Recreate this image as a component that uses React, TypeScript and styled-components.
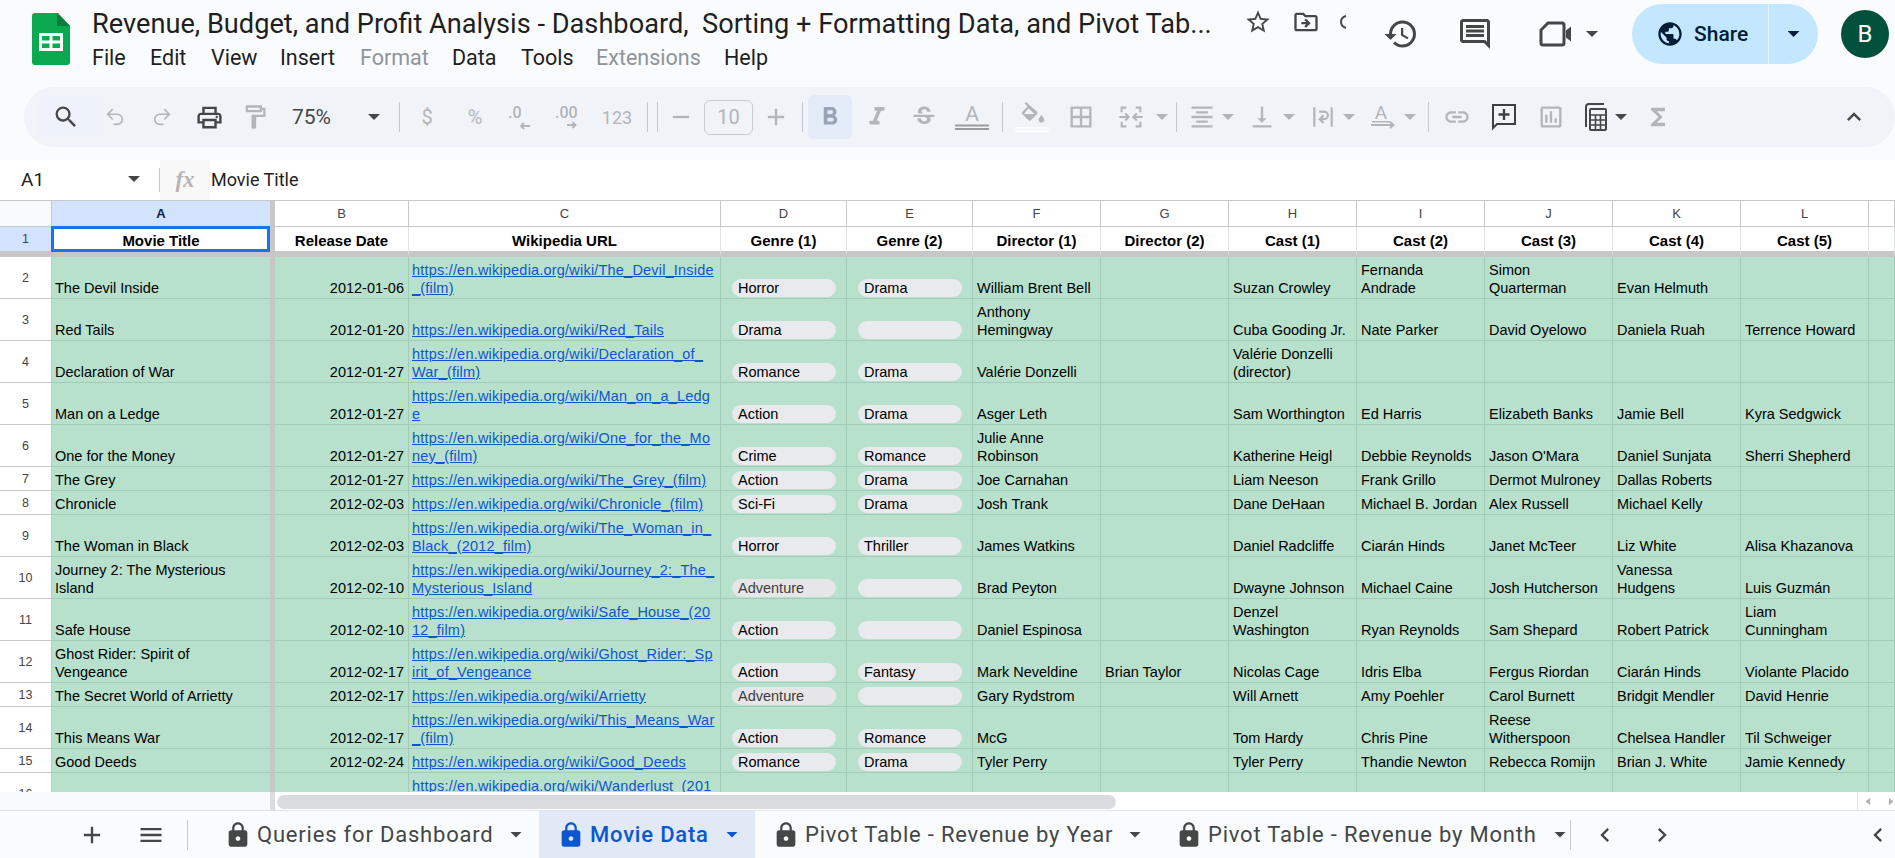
import type { ReactNode } from "react";
import styled, { createGlobalStyle } from "styled-components";
import { Redo2, Undo2 } from "lucide-react";
import {
  MdAdd,
  MdBorderAll,
  MdChevronLeft,
  MdChevronRight,
  MdExpandLess,
  MdFormatAlignCenter,
  MdFormatBold,
  MdFormatItalic,
  MdFunctions,
  MdHistory,
  MdLink,
  MdLock,
  MdMenu,
  MdOutlineComment,
  MdOutlineDriveFileMove,
  MdOutlineFormatPaint,
  MdOutlineInsertChart,
  MdOutlinePrint,
  MdPublic,
  MdRemove,
  MdSearch,
  MdStarBorder,
  MdStrikethroughS,
  MdVerticalAlignBottom,
} from "react-icons/md";

const GlobalStyle = createGlobalStyle`
  html, body {
    margin: 0;
    padding: 0;
    height: 100%;
    overflow: hidden;
    background: #f9fbfd;
    font-family: "Liberation Sans", Arial, sans-serif;
  }
  * { box-sizing: border-box; }
`;

const WIKI = "https://en.wikipedia.org/wiki/";

const COLUMNS = [
  { letter: "A", title: "Movie Title" },
  { letter: "B", title: "Release Date" },
  { letter: "C", title: "Wikipedia URL" },
  { letter: "D", title: "Genre (1)" },
  { letter: "E", title: "Genre (2)" },
  { letter: "F", title: "Director (1)" },
  { letter: "G", title: "Director (2)" },
  { letter: "H", title: "Cast (1)" },
  { letter: "I", title: "Cast (2)" },
  { letter: "J", title: "Cast (3)" },
  { letter: "K", title: "Cast (4)" },
  { letter: "L", title: "Cast (5)" },
  { letter: "", title: "" },
];

type Movie = { tall: boolean; cells: string[] };

const MOVIES: Movie[] = [
  { tall: true, cells: ["The Devil Inside", "2012-01-06", "The_Devil_Inside\n_(film)", "Horror", "Drama", "William Brent Bell", "", "Suzan Crowley", "Fernanda\nAndrade", "Simon\nQuarterman", "Evan Helmuth", ""] },
  { tall: true, cells: ["Red Tails", "2012-01-20", "Red_Tails", "Drama", "-", "Anthony\nHemingway", "", "Cuba Gooding Jr.", "Nate Parker", "David Oyelowo", "Daniela Ruah", "Terrence Howard"] },
  { tall: true, cells: ["Declaration of War", "2012-01-27", "Declaration_of_\nWar_(film)", "Romance", "Drama", "Valérie Donzelli", "", "Valérie Donzelli\n(director)", "", "", "", ""] },
  { tall: true, cells: ["Man on a Ledge", "2012-01-27", "Man_on_a_Ledg\ne", "Action", "Drama", "Asger Leth", "", "Sam Worthington", "Ed Harris", "Elizabeth Banks", "Jamie Bell", "Kyra Sedgwick"] },
  { tall: true, cells: ["One for the Money", "2012-01-27", "One_for_the_Mo\nney_(film)", "Crime", "Romance", "Julie Anne\nRobinson", "", "Katherine Heigl", "Debbie Reynolds", "Jason O'Mara", "Daniel Sunjata", "Sherri Shepherd"] },
  { tall: false, cells: ["The Grey", "2012-01-27", "The_Grey_(film)", "Action", "Drama", "Joe Carnahan", "", "Liam Neeson", "Frank Grillo", "Dermot Mulroney", "Dallas Roberts", ""] },
  { tall: false, cells: ["Chronicle", "2012-02-03", "Chronicle_(film)", "Sci-Fi", "Drama", "Josh Trank", "", "Dane DeHaan", "Michael B. Jordan", "Alex Russell", "Michael Kelly", ""] },
  { tall: true, cells: ["The Woman in Black", "2012-02-03", "The_Woman_in_\nBlack_(2012_film)", "Horror", "Thriller", "James Watkins", "", "Daniel Radcliffe", "Ciarán Hinds", "Janet McTeer", "Liz White", "Alisa Khazanova"] },
  { tall: true, cells: ["Journey 2: The Mysterious\nIsland", "2012-02-10", "Journey_2:_The_\nMysterious_Island", "Adventure", "-", "Brad Peyton", "", "Dwayne Johnson", "Michael Caine", "Josh Hutcherson", "Vanessa\nHudgens", "Luis Guzmán"] },
  { tall: true, cells: ["Safe House", "2012-02-10", "Safe_House_(20\n12_film)", "Action", "-", "Daniel Espinosa", "", "Denzel\nWashington", "Ryan Reynolds", "Sam Shepard", "Robert Patrick", "Liam\nCunningham"] },
  { tall: true, cells: ["Ghost Rider: Spirit of\nVengeance", "2012-02-17", "Ghost_Rider:_Sp\nirit_of_Vengeance", "Action", "Fantasy", "Mark Neveldine", "Brian Taylor", "Nicolas Cage", "Idris Elba", "Fergus Riordan", "Ciarán Hinds", "Violante Placido"] },
  { tall: false, cells: ["The Secret World of Arrietty", "2012-02-17", "Arrietty", "Adventure", "-", "Gary Rydstrom", "", "Will Arnett", "Amy Poehler", "Carol Burnett", "Bridgit Mendler", "David Henrie"] },
  { tall: true, cells: ["This Means War", "2012-02-17", "This_Means_War\n_(film)", "Action", "Romance", "McG", "", "Tom Hardy", "Chris Pine", "Reese\nWitherspoon", "Chelsea Handler", "Til Schweiger"] },
  { tall: false, cells: ["Good Deeds", "2012-02-24", "Good_Deeds", "Romance", "Drama", "Tyler Perry", "", "Tyler Perry", "Thandie Newton", "Rebecca Romijn", "Brian J. White", "Jamie Kennedy"] },
];

const MENUS = [
  { label: "File", gap: 0, w: 44 },
  { label: "Edit", gap: 14, w: 47 },
  { label: "View", gap: 14, w: 55 },
  { label: "Insert", gap: 14, w: 65 },
  { label: "Format", gap: 15, w: 78, off: true },
  { label: "Data", gap: 14, w: 54 },
  { label: "Tools", gap: 15, w: 60 },
  { label: "Extensions", gap: 15, w: 113, off: true },
  { label: "Help", gap: 15, w: 50 },
];

const Page = styled.div`
  width: 1895px;
  height: 858px;
  display: flex;
  flex-direction: column;
  overflow: hidden;
  background: #f9fbfd;
`;

const Header = styled.header`
  height: 87px;
  display: flex;
  align-items: flex-start;
  padding-left: 32px;
  flex-shrink: 0;
`;

const Logo = styled.svg`
  width: 38px;
  height: 52px;
  margin-top: 13px;
  margin-right: 22px;
  flex-shrink: 0;
`;

const TitleBlock = styled.div`
  width: 1291px;
  flex-shrink: 0;
  font-family: Roboto, sans-serif;
`;

const TitleRow = styled.div`
  height: 42px;
  padding-top: 6px;
  display: flex;
  align-items: center;
  color: #444746;
`;

const Title = styled.div`
  width: 1152px;
  font-size: 27.2px;
  line-height: 32px;
  color: #1f1f1f;
  white-space: pre;
  overflow: hidden;
`;

const DocIcon = styled.span<{ $gap: number; $w: number }>`
  display: flex;
  align-items: center;
  justify-content: center;
  width: ${(p) => p.$w}px;
  margin-left: ${(p) => p.$gap}px;
  margin-top: -5px;
  flex-shrink: 0;
`;

const MenuRow = styled.nav`
  display: flex;
  height: 30px;
  align-items: center;
`;

const MenuItem = styled.span<{ $off?: boolean; $gap: number; $w: number }>`
  width: ${(p) => p.$w}px;
  margin-left: ${(p) => p.$gap}px;
  font-size: 21.5px;
  color: ${(p) => (p.$off ? "#8f9499" : "#1f1f1f")};
  white-space: nowrap;
`;

const Actions = styled.div`
  display: flex;
  align-items: center;
  height: 68px;
  color: #444746;
`;

const ActionIcon = styled.span<{ $gap: number }>`
  display: flex;
  align-items: center;
  justify-content: center;
  width: 36px;
  height: 36px;
  margin-left: ${(p) => p.$gap}px;
  flex-shrink: 0;
`;

const SharePill = styled.div`
  width: 186px;
  height: 60px;
  margin-left: 34px;
  display: flex;
  align-items: center;
  background: #c2e7ff;
  border-radius: 30px;
  color: #001d35;
  font-family: Roboto, sans-serif;
  font-weight: 500;
  font-size: 21px;
`;

const ShareMain = styled.div`
  width: 137px;
  height: 100%;
  padding-left: 24px;
  display: flex;
  align-items: center;
  gap: 10px;
  border-right: 1px solid #e4f3fe;
`;

const ShareCaret = styled.div`
  flex: 1;
  display: flex;
  justify-content: center;
`;

const Avatar = styled.div`
  width: 48px;
  height: 48px;
  margin-left: 23px;
  border-radius: 50%;
  background: #00503c;
  color: #fff;
  font-family: Roboto, sans-serif;
  font-size: 24px;
  display: flex;
  align-items: center;
  justify-content: center;
`;

const Caret = styled.span<{ $off?: boolean; $gap?: number; $dark?: boolean }>`
  display: block;
  width: 12px;
  height: 6px;
  flex-shrink: 0;
  margin-left: ${(p) => p.$gap ?? 0}px;
  background: ${(p) => (p.$off ? "#b0b3b7" : p.$dark ? "#001d35" : "#444746")};
  clip-path: polygon(0 0, 100% 0, 50% 100%);
`;

const Toolbar = styled.div`
  height: 60px;
  margin-left: 24px;
  border-radius: 30px;
  background: #f0f4f9;
  display: flex;
  align-items: center;
  padding-left: 13px;
  flex-shrink: 0;
`;

const SearchButton = styled.div`
  width: 65px;
  height: 40px;
  padding-left: 15px;
  display: flex;
  align-items: center;
  background: #eef3fb;
  color: #444746;
  border-radius: 4px;
`;

const Tool = styled.span<{ $gap: number; $off?: boolean; $w?: number }>`
  display: flex;
  align-items: center;
  justify-content: center;
  width: ${(p) => p.$w ?? 24}px;
  height: 30px;
  flex-shrink: 0;
  margin-left: ${(p) => p.$gap}px;
  color: ${(p) => (p.$off ? "#b2b5b9" : "#444746")};
  svg { flex-shrink: 0; }
`;

const Zoom = styled.span`
  width: 41px;
  margin-left: 25px;
  font-family: Roboto, sans-serif;
  font-size: 21px;
  color: #444746;
  flex-shrink: 0;
`;

const Sep = styled.span<{ $gap: number }>`
  width: 1px;
  height: 30px;
  flex-shrink: 0;
  margin-left: ${(p) => p.$gap}px;
  background: #c7c9cc;
`;

const Digits = styled(Tool)<{ $size?: number }>`
  font-family: Roboto, sans-serif;
  font-size: ${(p) => p.$size ?? 18}px;
`;

const SizeBox = styled.span`
  width: 49px;
  height: 35px;
  margin-left: 11px;
  flex-shrink: 0;
  border: 1px solid #c9ccd0;
  border-radius: 6px;
  color: #b2b5b9;
  font-family: Roboto, sans-serif;
  font-size: 20px;
  display: flex;
  align-items: center;
  justify-content: center;
`;

const BoldButton = styled.span`
  width: 44px;
  height: 44px;
  margin-left: 5px;
  flex-shrink: 0;
  border-radius: 6px;
  background: #e3ebf8;
  color: #9aa3b5;
  display: flex;
  align-items: center;
  justify-content: center;
`;

const CollapseTool = styled(Tool)`
  margin-left: auto;
  margin-right: 29px;
`;

const FormulaBar = styled.div`
  height: 40px;
  margin-top: 13px;
  background: #fff;
  display: flex;
  align-items: center;
  flex-shrink: 0;
  font-size: 18px;
  color: #1f1f1f;
  font-family: Roboto, sans-serif;
`;

const FormulaText = styled.span`
  margin-top: -2px;
`;

const NameBox = styled.div`
  width: 159px;
  height: 100%;
  padding: 0 19px 2px 21px;
  display: flex;
  align-items: center;
  justify-content: space-between;
  font-size: 19px;
`;

const FormulaDivider = styled.span`
  width: 1px;
  height: 24px;
  flex-shrink: 0;
  background: #c7c7c7;
`;

const FxBox = styled.div`
  width: 50px;
  height: 100%;
  margin-right: 1px;
  background: #f8f8f8;
  display: flex;
  align-items: center;
  justify-content: center;
  font-family: "Liberation Serif", serif;
  font-style: italic;
  font-weight: 700;
  font-size: 23px;
  color: #b5b5b5;
`;

const Grid = styled.div`
  height: 592px;
  overflow: hidden;
  flex-shrink: 0;
  background: #fff;
  border-top: 1px solid #c7c7c7;
`;

const Row = styled.div<{ $h: number }>`
  display: grid;
  grid-template-columns: 52px 223px 134px 312px 126px 126px repeat(6, 128px) 128px 1fr;
  height: ${(p) => p.$h}px;
`;

const Corner = styled.div`
  background: #f8f9fa;
  border-right: 1px solid #c7c7c7;
  border-bottom: 1px solid #c7c7c7;
`;

const Letter = styled.div<{ $active?: boolean; $frozen?: boolean }>`
  display: flex;
  align-items: center;
  justify-content: center;
  font-size: 13px;
  font-weight: ${(p) => (p.$active ? 700 : 400)};
  color: ${(p) => (p.$active ? "#0b1f3f" : "#444")};
  background: ${(p) => (p.$active ? "#d3e3fd" : "#fff")};
  border-right: ${(p) => (p.$frozen ? "5px solid #c7c7c7" : "1px solid #c7c7c7")};
  border-bottom: 1px solid #c7c7c7;
`;

const RowNumber = styled.div<{ $active?: boolean; $frozen?: boolean }>`
  display: flex;
  align-items: center;
  justify-content: center;
  font-size: 12.5px;
  color: #444;
  background: ${(p) => (p.$active ? "#d3e3fd" : "#fff")};
  border-right: 1px solid #c7c7c7;
  border-bottom: ${(p) => (p.$frozen ? "6px solid #c7c7c7" : "1px solid #c7c7c7")};
`;

const HeadCell = styled.div<{ $frozen?: boolean }>`
  display: flex;
  align-items: center;
  justify-content: center;
  padding-top: 2px;
  font-size: 15px;
  font-weight: 700;
  color: #000;
  background: #fff;
  border-right: ${(p) => (p.$frozen ? "5px solid #c7c7c7" : "1px solid #e2e3e3")};
  border-bottom: 6px solid #c7c7c7;
`;

const SelectedHead = styled(HeadCell)`
  position: relative;
  &::after {
    content: "";
    position: absolute;
    inset: -1px 0 -1px -1px;
    border: 3px solid #1a73e8;
    pointer-events: none;
  }
`;

const Cell = styled.div<{ $frozen?: boolean; $right?: boolean; $tight?: boolean }>`
  display: flex;
  align-items: flex-end;
  justify-content: ${(p) => (p.$right ? "flex-end" : "flex-start")};
  padding: 0 ${(p) => (p.$right ? 4 : 3)}px 1px ${(p) => (p.$tight ? 3 : 4)}px;
  font-size: 14.5px;
  line-height: 18px;
  color: #000;
  white-space: pre;
  overflow: hidden;
  background: #b7e1cd;
  border-right: ${(p) => (p.$frozen ? "5px solid #c7c7c7" : "1px solid #a3ccb8")};
  border-bottom: 1px solid #a3ccb8;
`;

const WikiLink = styled.a`
  color: #1155cc;
  text-decoration: underline;
  letter-spacing: 0.2px;
`;

const PillCell = styled(Cell)`
  padding: 0 10px 1px 11px;
`;

const Pill = styled.span<{ $muted?: boolean }>`
  display: block;
  width: 100%;
  height: 18px;
  padding-left: 6px;
  border-radius: 9px;
  background: ${(p) => (p.$muted ? "#e6e6e8" : "#e8eaed")};
  color: ${(p) => (p.$muted ? "#3d3d3d" : "#000")};
`;

const ScrollRow = styled.div`
  height: 19px;
  display: flex;
  flex-shrink: 0;
  background: #fff;
  border-bottom: 1px solid #e3e3e3;
`;

const ScrollGutter = styled.div`
  width: 270px;
  background: #f8f9fa;
`;

const ScrollFrozen = styled.div`
  width: 5px;
  background: #dadce0;
`;

const ScrollTrack = styled.div`
  flex: 1;
  padding: 3px 0 2px 2px;
`;

const ScrollThumb = styled.div`
  width: 839px;
  height: 14px;
  border-radius: 7px;
  background: #dadce0;
`;

const ScrollArrows = styled.div`
  width: 38px;
  display: flex;
  align-items: center;
  justify-content: space-between;
  padding-left: 6px;
  border-left: 1px solid #e3e3e3;
  overflow: hidden;
`;

const ScrollArrow = styled(Caret)<{ $turn: number }>`
  width: 8px;
  height: 5px;
  transform: rotate(${(p) => p.$turn}deg);
`;

const SheetBar = styled.footer`
  height: 47px;
  flex-shrink: 0;
  display: flex;
  align-items: center;
  font-family: Roboto, sans-serif;
  color: #444746;
`;

const SheetButton = styled.span<{ $gap: number }>`
  display: flex;
  width: 28px;
  justify-content: center;
  flex-shrink: 0;
  margin-left: ${(p) => p.$gap}px;
  color: #444746;
`;

const SheetSep = styled.span<{ $gap: number }>`
  width: 1px;
  height: 30px;
  background: #c7c7c7;
  flex-shrink: 0;
  margin-left: ${(p) => p.$gap}px;
`;

const Tab = styled.div<{ $active?: boolean; $w: number; $pad: number; $gap?: number }>`
  width: ${(p) => p.$w}px;
  height: 100%;
  flex-shrink: 0;
  margin-left: ${(p) => p.$gap ?? 0}px;
  padding-left: ${(p) => p.$pad}px;
  display: flex;
  align-items: center;
  gap: 5px;
  background: ${(p) => (p.$active ? "#e1e9f7" : "transparent")};
  color: ${(p) => (p.$active ? "#0b57d0" : "#444746")};
  font-size: 22px;
  font-weight: ${(p) => (p.$active ? 500 : 400)};
  letter-spacing: 0.8px;
  white-space: nowrap;
  svg { flex-shrink: 0; }
`;

const TabCaret = styled(Caret)<{ $color?: string; $end: number }>`
  margin-left: auto;
  margin-right: ${(p) => p.$end}px;
  background: ${(p) => p.$color ?? "#444746"};
`;

const off = "#b2b5b9";

const DecimalIcon = ({ label, more }: { label: string; more?: boolean }) => (
  <svg width="34" height="30" viewBox="0 0 34 30" fill="currentColor">
    <text x={more ? 3 : 7} y="16" fontFamily="Roboto, sans-serif" fontWeight="500" fontSize="16">
      {label}
    </text>
    {more ? (
      <path d="M15 23h8.5M20.5 20l3 3-3 3" fill="none" stroke="currentColor" strokeWidth="1.8" />
    ) : (
      <path d="M29 24h-9M23 21l-3 3 3 3" fill="none" stroke="currentColor" strokeWidth="1.8" />
    )}
  </svg>
);

const FontColorIcon = () => (
  <svg width="34" height="30" viewBox="0 0 34 30">
    <text x="17" y="19" textAnchor="middle" fontFamily="Roboto, sans-serif" fontSize="21" fill="#b2b5b9">
      A
    </text>
    <path d="M0 22.5h34v2H0zM0 26h34v2H0z" fill="#999b9e" />
  </svg>
);

const FillIcon = () => (
  <svg width="34" height="32" viewBox="0 0 34 32" fill="currentColor">
    <path d="M11 1L9.6 2.4l3 3L7.5 10.5c-.8.8-.8 2 0 2.8l5.8 5.8c.8.8 2 .8 2.8 0l5.8-5.8c.8-.8.8-2 0-2.8L11 1zm2.5 6.5l6.2 5.5H9z" fillRule="evenodd" />
    <path d="M26.5 14s-2.8 3-2.8 4.8a2.8 2.8 0 0 0 5.6 0c0-1.8-2.8-4.8-2.8-4.8z" />
    <path d="M0 26h34v1.5H0zM0 29.5h34V31H0z" fill="#fff" />
  </svg>
);

const MergeIcon = () => (
  <svg width="28" height="28" viewBox="0 0 24 24" fill="none" stroke="currentColor" strokeWidth="1.8">
    <path d="M8 4H4v4M16 4h4v4M8 20H4v-4M16 20h4v-4" />
    <path d="M2 12h8M7 9l3 3-3 3M22 12h-8M17 9l-3 3 3 3" />
  </svg>
);

const WrapIcon = () => (
  <svg width="26" height="26" viewBox="0 0 24 24" fill="none" stroke="currentColor" strokeWidth="2">
    <path d="M4 3v18M20 3v18" />
    <path d="M8.5 7h4.5a3.5 3.5 0 0 1 0 7h-3M12.5 10.5L9 14l3.5 3.5" />
  </svg>
);

const RotateIcon = () => (
  <svg width="34" height="30" viewBox="0 0 34 30" fill="currentColor">
    <text x="15" y="17" textAnchor="middle" fontFamily="Roboto, sans-serif" fontSize="19">
      A
    </text>
    <path d="M5 23h22M24 20l3.5 3-3.5 3" fill="none" stroke="currentColor" strokeWidth="2" />
    <path d="M6 19h18v1.5H6z" />
  </svg>
);

const AddCommentIcon = () => (
  <svg width="26" height="28" viewBox="0 0 26 28" fill="none" stroke="#3c4043" strokeWidth="2">
    <path d="M2 2h22v19H6l-4 4z" />
    <path d="M13 6v11M7.5 11.5h11" strokeWidth="2.4" />
  </svg>
);

const CalculatorIcon = () => (
  <svg width="26" height="32" viewBox="0 0 26 32" fill="none" stroke="#444746" strokeWidth="2">
    <path d="M3 26V6a3 3 0 0 1 3-3h15" />
    <rect x="7" y="8" width="16" height="21" rx="1" />
    <path d="M7 14h16M7 19h16M7 24h16M12.5 14v15M17.5 14v15" strokeWidth="1.6" />
  </svg>
);

const VideoIcon = () => (
  <svg width="36" height="36" viewBox="0 0 36 36" fill="none" stroke="#444746" strokeWidth="3">
    <path d="M11 7h14a2 2 0 0 1 2 2v18a2 2 0 0 1-2 2H6a2 2 0 0 1-2-2V14z" />
    <path d="M29 14.5l5-4v15l-5-4z" fill="#444746" stroke="none" />
  </svg>
);

const CloudSliver = () => (
  <svg width="8" height="14" viewBox="0 0 8 14" fill="none" stroke="#444746" strokeWidth="2">
    <path d="M6 1C2 2 1 5 1 7c0 3 2 5 5 6" />
  </svg>
);

type TabItemProps = { label: string; active?: boolean; w: number; pad: number; end: number; gap?: number };

const TabItem = ({ label, active, w, pad, end, gap }: TabItemProps) => (
  <Tab $active={active} $w={w} $pad={pad} $gap={gap}>
    <MdLock size={28} />
    <span>{label}</span>
    <TabCaret $end={end} $color={active ? "#0b57d0" : "#444746"} />
  </Tab>
);

const ToolIcon = ({ gap, children, w }: { gap: number; children: ReactNode; w?: number }) => (
  <Tool $gap={gap} $off $w={w}>
    {children}
  </Tool>
);

export default function App() {
  return (
    <Page>
      <GlobalStyle />
      <Header>
        <Logo viewBox="0 0 38 52">
          <path d="M3 0h23l12 13v36a3 3 0 0 1-3 3H3a3 3 0 0 1-3-3V3a3 3 0 0 1 3-3z" fill="#0aa84f" />
          <path d="M25 0l13 13H25z" fill="#0c7c3c" />
          <path d="M7 20h24v18H7zM10 23v4.5h7.5V23zm10.5 0v4.5H28V23zM10 30.5V35h7.5v-4.5zm10.5 0V35H28v-4.5z" fill="#fff" fillRule="evenodd" />
        </Logo>
        <TitleBlock>
          <TitleRow>
            <Title>Revenue, Budget, and Profit Analysis - Dashboard,  Sorting + Formatting Data, and Pivot Tab...</Title>
            <DocIcon $gap={0} $w={28}>
              <MdStarBorder size={28} />
            </DocIcon>
            <DocIcon $gap={20} $w={28}>
              <MdOutlineDriveFileMove size={28} />
            </DocIcon>
            <DocIcon $gap={20} $w={8}>
              <CloudSliver />
            </DocIcon>
          </TitleRow>
          <MenuRow>
            {MENUS.map((m) => (
              <MenuItem key={m.label} $off={m.off} $gap={m.gap} $w={m.w}>
                {m.label}
              </MenuItem>
            ))}
          </MenuRow>
        </TitleBlock>
        <Actions>
          <ActionIcon $gap={0}>
            <MdHistory size={38} />
          </ActionIcon>
          <ActionIcon $gap={38}>
            <MdOutlineComment size={38} />
          </ActionIcon>
          <ActionIcon $gap={44}>
            <VideoIcon />
          </ActionIcon>
          <Caret $gap={13} />
          <SharePill>
            <ShareMain>
              <MdPublic size={28} />
              Share
            </ShareMain>
            <ShareCaret>
              <Caret $dark />
            </ShareCaret>
          </SharePill>
          <Avatar>B</Avatar>
        </Actions>
      </Header>

      <Toolbar>
        <SearchButton>
          <MdSearch size={28} />
        </SearchButton>
        <ToolIcon gap={1}><Undo2 size={22} strokeWidth={1.8} /></ToolIcon>
        <ToolIcon gap={23}><Redo2 size={22} strokeWidth={1.8} /></ToolIcon>
        <Tool $gap={23}><MdOutlinePrint size={29} /></Tool>
        <ToolIcon gap={22}><MdOutlineFormatPaint size={28} /></ToolIcon>
        <Zoom>75%</Zoom>
        <Caret $gap={35} />
        <Sep $gap={19} />
        <Digits $gap={15} $off $size={20}>$</Digits>
        <Digits $gap={24} $off $size={20}>%</Digits>
        <ToolIcon gap={19}><DecimalIcon label=".0" /></ToolIcon>
        <ToolIcon gap={27}><DecimalIcon label=".00" more /></ToolIcon>
        <Digits $gap={21} $off $w={30}>123</Digits>
        <Sep $gap={15} />
        <Sep $gap={9} />
        <ToolIcon gap={11}><MdRemove size={28} /></ToolIcon>
        <SizeBox>10</SizeBox>
        <ToolIcon gap={11}><MdAdd size={28} /></ToolIcon>
        <Sep $gap={14} />
        <BoldButton><MdFormatBold size={30} /></BoldButton>
        <ToolIcon gap={13}><MdFormatItalic size={30} /></ToolIcon>
        <ToolIcon gap={23}><MdStrikethroughS size={28} /></ToolIcon>
        <ToolIcon gap={24}><FontColorIcon /></ToolIcon>
        <Sep $gap={18} />
        <ToolIcon gap={17}><FillIcon /></ToolIcon>
        <ToolIcon gap={25}><MdBorderAll size={28} /></ToolIcon>
        <ToolIcon gap={26}><MergeIcon /></ToolIcon>
        <Caret $off $gap={13} />
        <Sep $gap={8} />
        <ToolIcon gap={13}><MdFormatAlignCenter size={28} /></ToolIcon>
        <Caret $off $gap={8} />
        <ToolIcon gap={16}><MdVerticalAlignBottom size={28} /></ToolIcon>
        <Caret $off $gap={9} />
        <ToolIcon gap={16}><WrapIcon /></ToolIcon>
        <Caret $off $gap={8} />
        <ToolIcon gap={16}><RotateIcon /></ToolIcon>
        <Caret $off $gap={9} />
        <Sep $gap={12} />
        <ToolIcon gap={16}><MdLink size={28} /></ToolIcon>
        <Tool $gap={23}><AddCommentIcon /></Tool>
        <ToolIcon gap={23}><MdOutlineInsertChart size={28} /></ToolIcon>
        <Tool $gap={21}><CalculatorIcon /></Tool>
        <Caret $gap={7} />
        <ToolIcon gap={19}><MdFunctions size={28} color={off} /></ToolIcon>
        <CollapseTool $gap={0}><MdExpandLess size={28} /></CollapseTool>
      </Toolbar>

      <FormulaBar>
        <NameBox>
          A1
          <Caret />
        </NameBox>
        <FormulaDivider />
        <FxBox>fx</FxBox>
        <FormulaText>Movie Title</FormulaText>
      </FormulaBar>

      <Grid>
        <Row $h={26}>
          <Corner />
          {COLUMNS.map((c, i) => (
            <Letter key={i} $active={i === 0} $frozen={i === 0}>
              {c.letter}
            </Letter>
          ))}
        </Row>
        <Row $h={30}>
          <RowNumber $active $frozen>1</RowNumber>
          {COLUMNS.map((c, i) =>
            i === 0 ? (
              <SelectedHead key={i} $frozen>{c.title}</SelectedHead>
            ) : (
              <HeadCell key={i}>{c.title}</HeadCell>
            ),
          )}
        </Row>
        {MOVIES.map((movie, r) => (
          <Row key={r} $h={movie.tall ? 42 : 24}>
            <RowNumber>{r + 2}</RowNumber>
            {movie.cells.map((value, i) => {
              if (i === 2) {
                return (
                  <Cell key={i} $tight>
                    <WikiLink href={WIKI + value.replace("\n", "")}>{WIKI + value}</WikiLink>
                  </Cell>
                );
              }
              if (i === 3 || i === 4) {
                return (
                  <PillCell key={i}>
                    <Pill $muted={value === "Adventure"}>{value === "-" ? "" : value}</Pill>
                  </PillCell>
                );
              }
              return (
                <Cell key={i} $frozen={i === 0} $right={i === 1} $tight={i === 0}>
                  {value}
                </Cell>
              );
            })}
            <Cell />
          </Row>
        ))}
        <Row $h={42}>
          <RowNumber>16</RowNumber>
          <Cell $frozen />
          <Cell />
          <Cell $tight>
            <WikiLink href={WIKI + "Wanderlust_(2012_film)"}>{WIKI + "Wanderlust_(201\n2_film)"}</WikiLink>
          </Cell>
          {COLUMNS.slice(3).map((c) => (
            <Cell key={c.letter} />
          ))}
        </Row>
      </Grid>

      <ScrollRow>
        <ScrollGutter />
        <ScrollFrozen />
        <ScrollTrack>
          <ScrollThumb />
        </ScrollTrack>
        <ScrollArrows>
          <ScrollArrow $off $turn={90} />
          <ScrollArrow $off $turn={-90} />
        </ScrollArrows>
      </ScrollRow>

      <SheetBar>
        <SheetButton $gap={78}><MdAdd size={28} /></SheetButton>
        <SheetButton $gap={31}><MdMenu size={30} /></SheetButton>
        <SheetSep $gap={22} />
        <TabItem label="Queries for Dashboard" w={324} gap={27} pad={9} end={17} />
        <TabItem label="Movie Data" active w={216} pad={18} end={17} />
        <TabItem label="Pivot Table - Revenue by Year" w={408} pad={17} end={22} />
        <TabItem label="Pivot Table - Revenue by Month" w={407} pad={12} end={4} />
        <SheetSep $gap={0} />
        <SheetButton $gap={20}><MdChevronLeft size={30} /></SheetButton>
        <SheetButton $gap={29}><MdChevronRight size={30} /></SheetButton>
        <SheetButton $gap={188}><MdChevronLeft size={30} /></SheetButton>
      </SheetBar>
    </Page>
  );
}
